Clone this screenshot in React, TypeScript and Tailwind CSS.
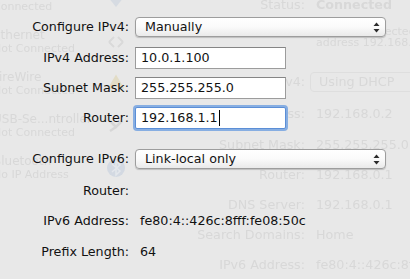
import React from "react";

function GhostRow({ label, children, className = "" }: { label: string; children?: React.ReactNode; className?: string }) {
  return (
    <div className={`flex items-center gap-[11px] ${className}`}>
      <span className="w-[169px] shrink-0 text-right">{label}</span>
      {children}
    </div>
  );
}

const ghostSide = [
  { name: "Wi-Fi", sub: "Connected", icon: "wifi" },
  { name: "Ethernet", sub: "Not Connected", icon: "eth" },
  { name: "FireWire", sub: "Not Connected", icon: "fw" },
  { name: "USB-Se...ntroller", sub: "Not Connected", icon: "usb" },
  { name: "Bluetooth", sub: "No IP Address", icon: "bt" },
];

function GhostIcon({ kind }: { kind: string }) {
  if (kind === "bt")
    return (
      <svg width="22" height="22" viewBox="0 0 22 22">
        <circle cx="11" cy="11" r="9" fill="#d3d9e2" />
        <path d="M7 7 L15 14 L11 18 L11 4 L15 8 L7 15" fill="none" stroke="#e4e7ec" strokeWidth="1.5" />
      </svg>
    );
  if (kind === "fw")
    return (
      <svg width="22" height="22" viewBox="0 0 22 22">
        <path d="M4 16 L11 4 L18 16 M7 16 L11 9 L15 16" fill="none" stroke="#e2dcc6" strokeWidth="2.5" />
      </svg>
    );
  if (kind === "usb")
    return (
      <svg width="22" height="22" viewBox="0 0 22 22">
        <path d="M5 6 L11 12 L17 6 M5 16 L11 12" fill="none" stroke="#d6d6d6" strokeWidth="2.5" />
      </svg>
    );
  if (kind === "wifi")
    return (
      <svg width="22" height="22" viewBox="0 0 22 22">
        <path d="M3 8 L11 18 L19 8 Q11 2 3 8 Z" fill="#d6dbe2" />
      </svg>
    );
  return (
    <svg width="22" height="22" viewBox="0 0 22 22">
      <path d="M4 11 L9 6 M4 11 L9 16 M18 11 L13 6 M18 11 L13 16" fill="none" stroke="#d9d9d9" strokeWidth="2" />
    </svg>
  );
}

function Ghost() {
  return (
    <div className="col-start-1 row-start-1 flex text-[#d8d8d8] blur-[0.4px]">
      <div className="flex w-[136px] shrink-0 flex-col -mt-[21px]">
        {ghostSide.map((s) => (
          <div key={s.name} className="flex h-[42px] items-center pr-[9px]">
            <div className="-ml-[7px] flex min-w-0 flex-1 flex-col whitespace-nowrap">
              <span className="text-[12px] leading-[13px]">{s.name}</span>
              <span className="text-[11px] leading-[13px]">{s.sub}</span>
            </div>
            <GhostIcon kind={s.icon} />
          </div>
        ))}
      </div>
      <div className="flex flex-1 flex-col whitespace-nowrap">
        <GhostRow label="Status:" className="-mt-[5px] h-[20px]">
          <span className="font-bold">Connected</span>
        </GhostRow>
        <div className="mt-[11px] h-[11px] pl-[180px] text-[11px] leading-[11px]">Wi-Fi is connected and currently</div>
        <div className="h-[11px] pl-[180px] text-[11px] leading-[11px]">address 192.168.0.2.</div>
        <GhostRow label="Configure IPv4:" className="mt-[24px] h-[20px]">
          <span className="-ml-[6px] w-[120px] rounded-[4px] border border-[#dedede] px-[8px] leading-[18px]">Using DHCP</span>
        </GhostRow>
        <GhostRow label="IP Address:" className="mt-[12px] h-[20px]">
          <span>192.168.0.2</span>
        </GhostRow>
        <GhostRow label="Subnet Mask:" className="mt-[11px] h-[20px]">
          <span>255.255.255.0</span>
        </GhostRow>
        <GhostRow label="Router:" className="mt-[10px] h-[20px]">
          <span>192.168.0.1</span>
        </GhostRow>
        <GhostRow label="DNS Server:" className="mt-[10px] h-[20px]">
          <span>192.168.0.1</span>
        </GhostRow>
        <GhostRow label="Search Domains:" className="mt-[10px] h-[20px]">
          <span>Home</span>
        </GhostRow>
        <GhostRow label="IPv6 Address:" className="mt-[10px] h-[20px]">
          <span>fe80:4::426c:8fff:fe08:50c</span>
        </GhostRow>
      </div>
    </div>
  );
}

function Arrows() {
  return (
    <svg width="7" height="11" viewBox="0 0 7 11" className="shrink-0">
      <path d="M3.5 0.5 L6.5 4 L0.5 4 Z" fill="#2b2b2b" />
      <path d="M3.5 10.5 L6.5 7 L0.5 7 Z" fill="#2b2b2b" />
    </svg>
  );
}

function Popup({ value }: { value: string }) {
  return (
    <div className="flex h-[20px] w-[251px] items-center justify-between rounded-[4px] border border-[#9d9d9d] bg-gradient-to-b from-white via-[#fafafa] to-[#eaeaea] pl-[9px] pr-[5px] shadow-[0_1px_1px_rgba(0,0,0,0.18)]">
      <span>{value}</span>
      <Arrows />
    </div>
  );
}

function Field({ value, focused }: { value: string; focused?: boolean }) {
  return (
    <div
      className={`flex h-[22px] w-[151px] items-center bg-white px-[5px] ${
        focused
          ? "rounded-[2px] border border-[#5b8ed6] shadow-[0_0_0_2px_rgba(118,163,225,0.85)]"
          : "border border-[#9c9c9c] border-t-[#858585]"
      }`}
    >
      <span>{value}</span>
      {focused && <span className="ml-[1px] h-[16px] w-px bg-black" />}
    </div>
  );
}

function Row({ label, children, className = "" }: { label: string; children?: React.ReactNode; className?: string }) {
  return (
    <div className={`flex items-center gap-[6px] ${className}`}>
      <span className="w-[129px] shrink-0 text-right">{label}</span>
      {children}
    </div>
  );
}

export default function App() {
  return (
    <div className="grid h-[279px] w-[410px] overflow-hidden bg-[#e8e8e8] font-['DejaVu_Sans',sans-serif] text-[12.7px] text-[#111]">
      <Ghost />
      <div className="relative col-start-1 row-start-1 flex flex-col pt-[17px]">
        <Row label="Configure IPv4:" className="h-[20px]">
          <Popup value="Manually" />
        </Row>
        <Row label="IPv4 Address:" className="mt-[10px] h-[22px]">
          <Field value="10.0.1.100" />
        </Row>
        <Row label="Subnet Mask:" className="mt-[8px] h-[22px]">
          <Field value="255.255.255.0" />
        </Row>
        <Row label="Router:" className="mt-[8px] h-[22px]">
          <Field value="192.168.1.1" focused />
        </Row>
        <Row label="Configure IPv6:" className="mt-[20px] h-[20px]">
          <Popup value="Link-local only" />
        </Row>
        <Row label="Router:" className="mt-[12px] h-[20px]" />
        <Row label="IPv6 Address:" className="mt-[10px] h-[20px]">
          <span className="pl-[5px]">fe80:4::426c:8fff:fe08:50c</span>
        </Row>
        <Row label="Prefix Length:" className="mt-[11px] h-[20px]">
          <span className="pl-[5px]">64</span>
        </Row>
      </div>
    </div>
  );
}
